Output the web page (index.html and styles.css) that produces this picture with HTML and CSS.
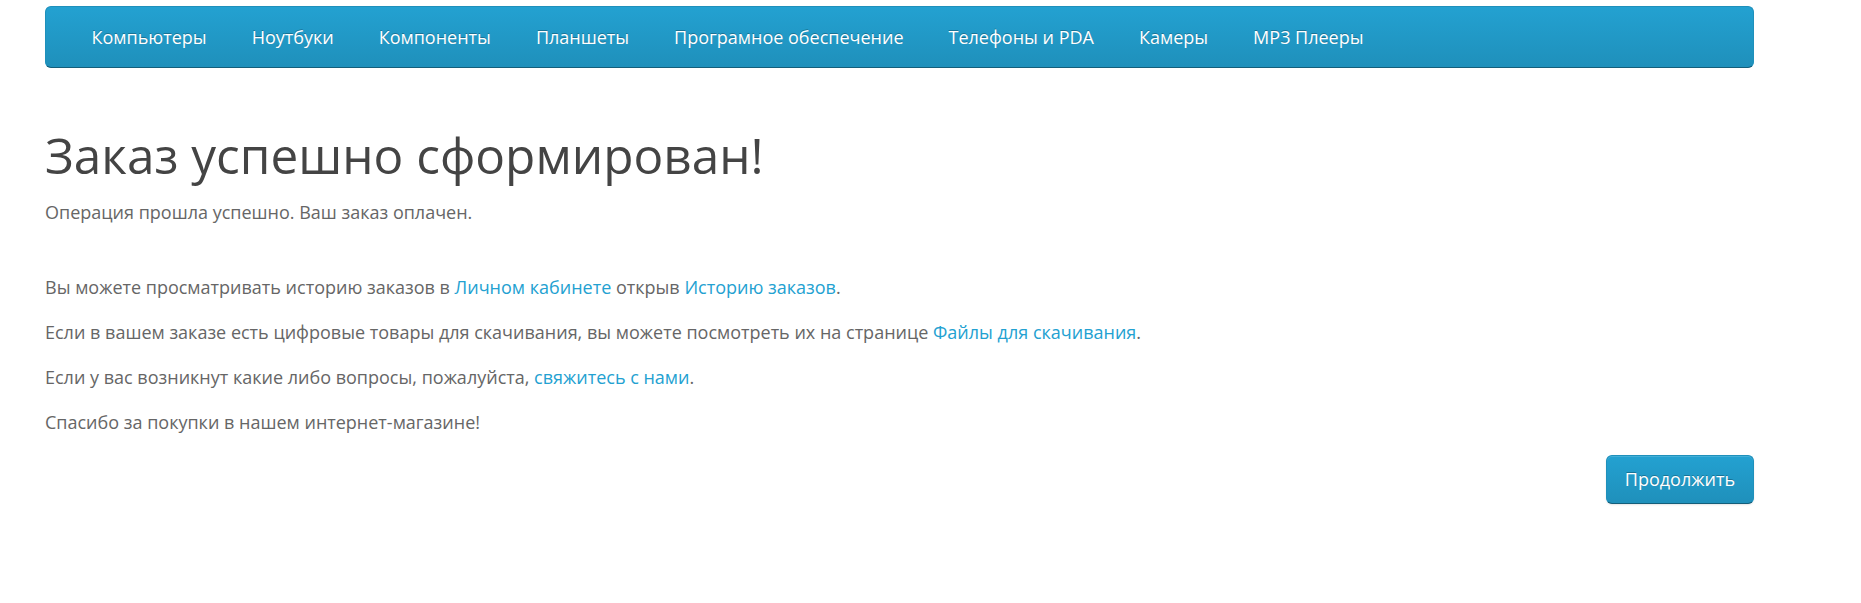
FILE: index.html
```html
<!DOCTYPE html>
<html lang="ru">
<head>
<meta charset="utf-8">
<title>Заказ успешно сформирован!</title>
<link rel="stylesheet" href="styles.css">
</head>
<body>
<div class="page">
  <nav class="menu">
    <ul class="menu-list">
      <li><a href="#">Компьютеры</a></li>
      <li><a href="#">Ноутбуки</a></li>
      <li><a href="#">Компоненты</a></li>
      <li><a href="#">Планшеты</a></li>
      <li><a href="#">Програмное обеспечение</a></li>
      <li><a href="#">Телефоны и PDA</a></li>
      <li><a href="#">Камеры</a></li>
      <li><a href="#">MP3 Плееры</a></li>
    </ul>
  </nav>
  <main class="content">
    <h1 class="title">Заказ успешно сформирован!</h1>
    <p class="intro">Операция прошла успешно. Ваш заказ оплачен.</p>
    <p>Вы можете просматривать историю заказов в <a href="#">Личном кабинете</a> открыв <a href="#">Историю заказов</a>.</p>
    <p>Если в вашем заказе есть цифровые товары для скачивания, вы можете посмотреть их на странице <a href="#">Файлы для скачивания</a>.</p>
    <p>Если у вас возникнут какие либо вопросы, пожалуйста, <a href="#">свяжитесь с нами</a>.</p>
    <p>Спасибо за покупки в нашем интернет-магазине!</p>
    <div class="buttons">
      <a class="btn-primary" href="#">Продолжить</a>
    </div>
  </main>
</div>
</body>
</html>
```
FILE: styles.css
```css
html, body {
  margin: 0;
  padding: 0;
  background: #fff;
}
body {
  font-family: "Open Sans", "Liberation Sans", sans-serif;
  font-size: 18px;
  line-height: 30px;
  color: #666;
}
.page {
  width: 1709px;
  margin-left: 45px;
  padding-top: 6px;
}
.menu {
  height: 60px;
  border: 1px solid #1f90bb;
  border-bottom-color: #145e7a;
  border-radius: 6px;
  background-color: #229ac8;
  background-image: linear-gradient(to bottom, #23a1d1, #1f90bb);
  margin-bottom: 30px;
}
.menu-list {
  list-style: none;
  margin: 0;
  padding: 0 0 0 23px;
  display: flex;
}
.menu-list a {
  display: block;
  padding: 15px 22.5px;
  line-height: 30px;
  color: #fff;
  text-decoration: none;
  text-shadow: 0 -1px 0 rgba(0, 0, 0, 0.25);
}
.content {
  display: flow-root;
}
.title {
  margin: 30px 0 15px;
  font-size: 49.5px;
  font-weight: 400;
  line-height: 1.1;
  color: #444;
}
.content p {
  margin: 0 0 15px;
}
.content p.intro {
  margin-bottom: 45px;
}
.content a {
  color: #23a1d1;
  text-decoration: none;
}
.buttons {
  margin: 18px 0;
  display: flex;
  justify-content: flex-end;
}
.content .btn-primary {
  display: inline-block;
  padding: 11px 18px;
  line-height: 25px;
  font-size: 18px;
  color: #fff;
  border: 1px solid #1f90bb;
  border-bottom-color: #145e7a;
  border-radius: 6px;
  background-color: #229ac8;
  background-image: linear-gradient(to bottom, #23a1d1, #1f90bb);
  text-shadow: 0 -1px 0 rgba(0, 0, 0, 0.25);
  box-shadow: inset 0 1px 0 rgba(255, 255, 255, 0.15), 0 1px 2px rgba(0, 0, 0, 0.1);
}
```
